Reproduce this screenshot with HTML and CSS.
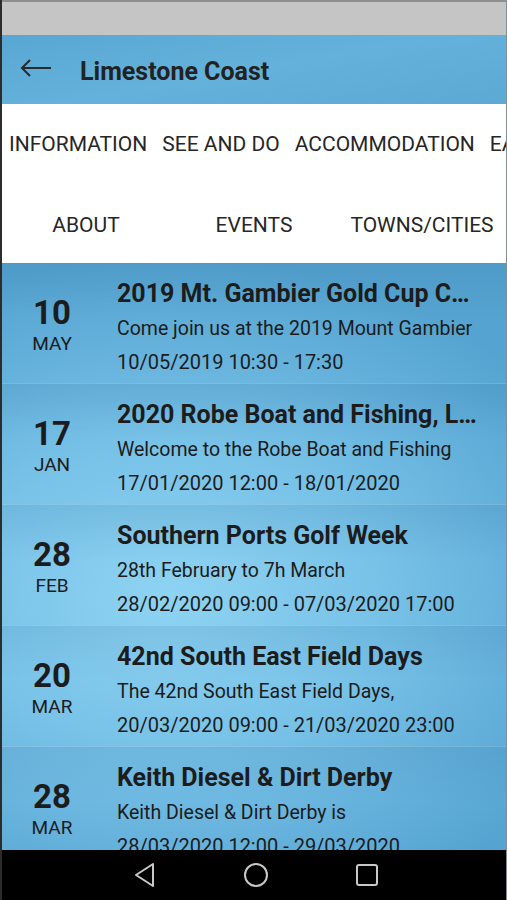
FILE: index.html
```html
<!DOCTYPE html>
<html lang="en">
<head>
    <meta charset="UTF-8">
    <meta name="viewport" content="width=device-width, initial-scale=1.0">
    <title>Limestone Coast - Events</title>
    <link rel="stylesheet" href="styles.css">
</head>
<body>
    <div class="phone">
        <div class="status-bar"></div>

        <header class="toolbar">
            <svg class="back-icon" width="32" height="20" viewBox="0 0 32 20">
                <path d="M31 10 H2 M10 2 L2 10 L10 18" fill="none" stroke="#2a2a2a" stroke-width="2"/>
            </svg>
            <h1>Limestone Coast</h1>
        </header>

        <nav class="tabs">
            <div class="tab-row scroll">
                <span class="tab">INFORMATION</span>
                <span class="tab">SEE AND DO</span>
                <span class="tab">ACCOMMODATION</span>
                <span class="tab">EAT AND DRINK</span>
            </div>
            <div class="tab-row fixed">
                <span class="tab">ABOUT</span>
                <span class="tab">EVENTS</span>
                <span class="tab">TOWNS/CITIES</span>
            </div>
        </nav>

        <main class="event-list">
            <div class="event">
                <div class="event-date">
                    <div class="day">10</div>
                    <div class="month">MAY</div>
                </div>
                <div class="event-info">
                    <div class="event-title">2019 Mt. Gambier Gold Cup Carnival</div>
                    <div class="event-desc">Come join us at the 2019 Mount Gambier</div>
                    <div class="event-time">10/05/2019 10:30 - 17:30</div>
                </div>
            </div>
            <div class="event">
                <div class="event-date">
                    <div class="day">17</div>
                    <div class="month">JAN</div>
                </div>
                <div class="event-info">
                    <div class="event-title">2020 Robe Boat and Fishing, Leisure Show</div>
                    <div class="event-desc">Welcome to the Robe Boat and Fishing</div>
                    <div class="event-time">17/01/2020 12:00 - 18/01/2020</div>
                </div>
            </div>
            <div class="event">
                <div class="event-date">
                    <div class="day">28</div>
                    <div class="month">FEB</div>
                </div>
                <div class="event-info">
                    <div class="event-title">Southern Ports Golf Week</div>
                    <div class="event-desc">28th February to 7h March</div>
                    <div class="event-time">28/02/2020 09:00 - 07/03/2020 17:00</div>
                </div>
            </div>
            <div class="event">
                <div class="event-date">
                    <div class="day">20</div>
                    <div class="month">MAR</div>
                </div>
                <div class="event-info">
                    <div class="event-title">42nd South East Field Days</div>
                    <div class="event-desc">The 42nd South East Field Days,</div>
                    <div class="event-time">20/03/2020 09:00 - 21/03/2020 23:00</div>
                </div>
            </div>
            <div class="event">
                <div class="event-date">
                    <div class="day">28</div>
                    <div class="month">MAR</div>
                </div>
                <div class="event-info">
                    <div class="event-title">Keith Diesel &amp; Dirt Derby</div>
                    <div class="event-desc">Keith Diesel &amp; Dirt Derby is</div>
                    <div class="event-time">28/03/2020 12:00 - 29/03/2020</div>
                </div>
            </div>
        </main>

        <footer class="nav-bar">
            <svg width="24" height="26" viewBox="0 0 24 26">
                <path d="M20 2 L3 13 L20 24 Z" fill="none" stroke="#c8c8c8" stroke-width="2" stroke-linejoin="round"/>
            </svg>
            <svg width="26" height="26" viewBox="0 0 26 26">
                <circle cx="13" cy="13" r="11" fill="none" stroke="#c8c8c8" stroke-width="2"/>
            </svg>
            <svg width="24" height="24" viewBox="0 0 24 24">
                <rect x="2" y="2" width="20" height="20" rx="2" fill="none" stroke="#c8c8c8" stroke-width="2"/>
            </svg>
        </footer>
    </div>
</body>
</html>
```

FILE: styles.css
```css
* {
    margin: 0;
    padding: 0;
    box-sizing: border-box;
}

body {
    font-family: Roboto, 'Noto Sans', sans-serif;
    color: #1c1c1c;
    background: #000;
}

.phone {
    width: 507px;
    height: 900px;
    display: flex;
    flex-direction: column;
    overflow: hidden;
    border-left: 2px solid #2c2c2c;
    border-right: 1px solid #7d8f9a;
    background: #5aa8d4;
}

.status-bar {
    height: 35px;
    flex-shrink: 0;
    background: #c5c5c5;
    border-top: 2px solid #8f8f8f;
}

.toolbar {
    height: 69px;
    flex-shrink: 0;
    display: flex;
    align-items: center;
    padding: 3px 0 0 18px;
    background: linear-gradient(170deg, #58a7d3 0%, #64b2db 50%, #5ca9d3 100%);
}

.back-icon {
    margin-right: 28px;
    margin-top: -7px;
}

.toolbar h1 {
    font-size: 25px;
    font-weight: 700;
    color: #222;
}

.tabs {
    background: #fff;
    flex-shrink: 0;
}

.tab-row {
    height: 80px;
    display: flex;
    align-items: center;
    white-space: nowrap;
    overflow: hidden;
}

.tab-row.fixed {
    height: 79px;
    padding-top: 2px;
}

.tab {
    font-size: 21px;
    color: #262626;
}

.scroll .tab {
    padding: 0 7.5px;
}

.scroll .tab:first-child {
    padding-left: 7px;
}

.fixed .tab {
    flex: 1;
    text-align: center;
}

.event-list {
    flex: 1;
    overflow: hidden;
    background: radial-gradient(ellipse 470px 340px at 33% 57%, #8ed3f2 0%, #78c2e8 45%, #62afda 78%, #55a3d0 100%);
}

.event {
    height: 121px;
    display: flex;
    border-bottom: 1px solid rgba(255, 255, 255, 0.18);
    background: linear-gradient(to bottom, rgba(20, 80, 130, 0.1), rgba(20, 80, 130, 0) 45%);
}

.event-date {
    width: 100px;
    flex-shrink: 0;
    text-align: center;
    padding-top: 32px;
}

.day {
    font-size: 33px;
    font-weight: 700;
    line-height: 36px;
}

.month {
    font-size: 19px;
    line-height: 26px;
}

.event-info {
    flex: 1;
    min-width: 0;
    padding: 13px 24px 0 15px;
}

.event-title {
    font-size: 25px;
    font-weight: 700;
    line-height: 36px;
    white-space: nowrap;
    overflow: hidden;
    text-overflow: ellipsis;
}

.event-desc,
.event-time {
    font-size: 19.5px;
    line-height: 34px;
    white-space: nowrap;
    overflow: hidden;
}

.event-time {
    font-size: 20px;
    line-height: 32px;
}

.nav-bar {
    height: 50px;
    flex-shrink: 0;
    background: #000;
    display: flex;
    align-items: center;
    justify-content: center;
    gap: 86px;
    padding-left: 4px;
}
```
